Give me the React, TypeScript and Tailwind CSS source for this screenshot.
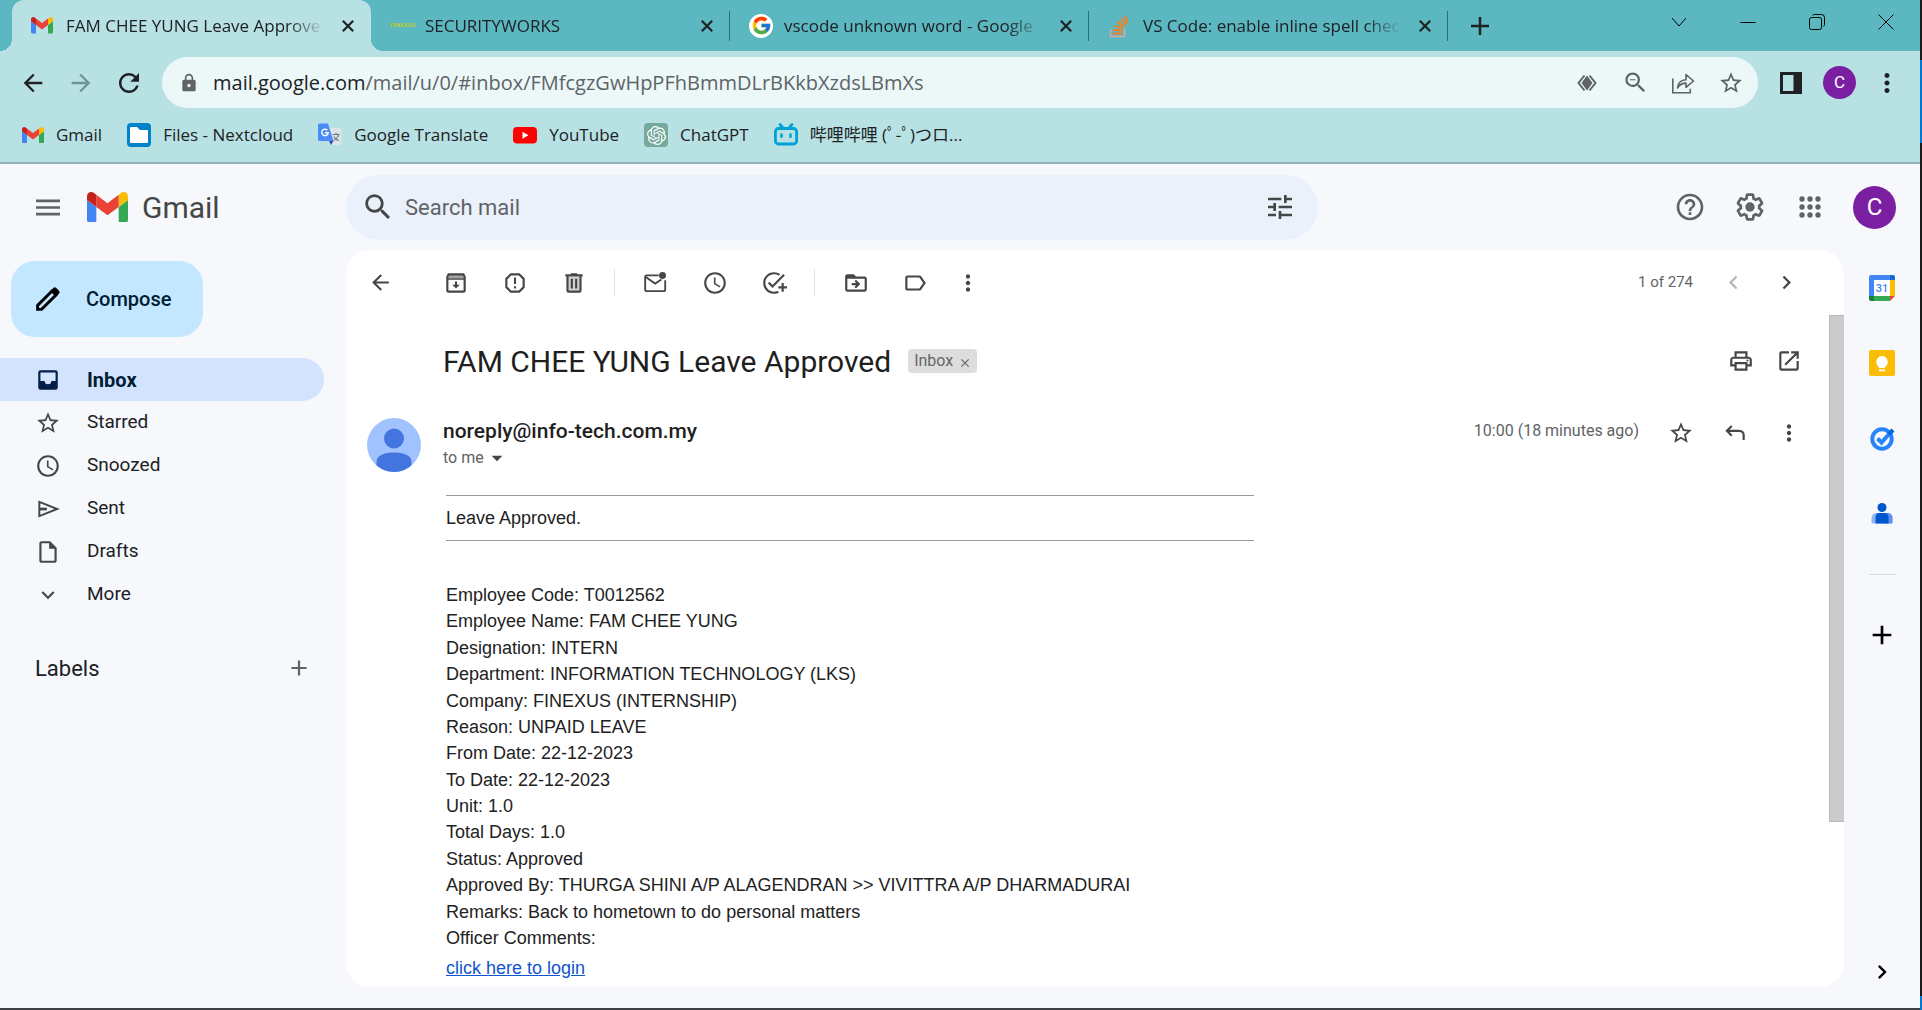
import React from "react";
import {
  MdAccessTime, MdAdd, MdAddTask, MdArrowBack, MdArrowDropDown, MdArrowForward, MdChevronLeft,
  MdChevronRight, MdClose, MdDriveFileMoveOutline, MdExpandMore, MdHelpOutline,
  MdLock, MdMenu, MdMoreVert, MdOpenInNew, MdOutlineInsertDriveFile, MdOutlineLabel, MdOutlinePrint,
  MdRefresh, MdSearch, MdStarBorder, MdTune, MdZoomOut,
} from "react-icons/md";
import { FcGoogle } from "react-icons/fc";
import { SiOpenai } from "react-icons/si";

type IconProps = { className?: string };

const GmailLogo = ({ className }: IconProps) => (
  <svg viewBox="52 42 88 66" className={className} aria-hidden="true">
    <path fill="#4285f4" d="M58 108h14V74L52 59v43c0 3.32 2.69 6 6 6" />
    <path fill="#34a853" d="M120 108h14c3.32 0 6-2.69 6-6V59l-20 15" />
    <path fill="#fbbc04" d="M120 48v26l20-15v-8c0-7.42-8.47-11.65-14.4-7.2" />
    <path fill="#ea4335" d="M72 74V48l24 18 24-18v26L96 92" />
    <path fill="#c5221f" d="M52 51v8l20 15V48l-5.6-4.2c-5.94-4.45-14.4-.22-14.4 7.2" />
  </svg>
);

const StackIcon = () => (
  <svg viewBox="0 0 24 24" className="size-6" fill="none" aria-hidden="true">
    <path d="M2.500 15v7.500h14V15" stroke="#d9a9a0" strokeWidth="1.500" />
    <path d="M5 19.500h9M5.300 15.800l8.800 1M6.600 11.800l8.300 2.800M9.300 7.600l6.900 5M13 4.200l5 6.600M17.500 2l1.600 7.500" stroke="#f48024" strokeWidth="2" />
  </svg>
);

const NextcloudIcon = () => (
  <svg viewBox="0 0 24 24" className="size-6" aria-hidden="true">
    <rect width="24" height="24" rx="4" fill="#0082c9" />
    <path d="M3 5a1 1 0 0 1 1-1h6l3 3h7a1 1 0 0 1 1 1v11a1 1 0 0 1-1 1H4a1 1 0 0 1-1-1z" fill="#fff" />
  </svg>
);

const TranslateIcon = () => (
  <svg viewBox="0 0 24 24" className="size-6" aria-hidden="true">
    <path d="M9 5h13a1.500 1.500 0 0 1 1.500 1.500v14A1.500 1.500 0 0 1 22 22h-8z" fill="#dfe3e6" />
    <path d="M14.500 11.500h7M18 9.800v1.700M20.500 11.500c-.7 3-2.700 5-5 6M15.800 13.500c1 2 3 3.500 5 4" stroke="#607988" strokeWidth="1.100" fill="none" />
    <path d="M11 18h4.500L13 22z" fill="#3949ab" />
    <path d="M1.500.500H10L15.500 18H1.500A1.500 1.500 0 0 1 0 16.500V2A1.500 1.500 0 0 1 1.500.500z" fill="#4b8bf5" />
    <path d="M9.300 7.200A3.200 3.200 0 1 0 10.200 9.700H7" stroke="#fff" strokeWidth="1.400" fill="none" />
  </svg>
);

const YouTubeIcon = () => (
  <svg viewBox="0 0 24 24" className="size-6" aria-hidden="true">
    <rect y="4" width="24" height="16.500" rx="4" fill="#f00" />
    <path d="M9.500 8.800v7l6-3.500z" fill="#fff" />
  </svg>
);

const ChatGptIcon = () => (
  <span className="flex size-6 items-center justify-center rounded bg-[#75a99b] text-white">
    <SiOpenai size={19} />
  </span>
);

const BilibiliIcon = () => (
  <svg viewBox="0 0 24 24" className="size-6" fill="none" stroke="#00a1d6" aria-hidden="true">
    <path d="M6 1.500l3 3.500M18 1.500l-3 3.500" strokeWidth="2.800" strokeLinecap="round" />
    <rect x="1.400" y="5.500" width="21.200" height="15.500" rx="3" strokeWidth="2.800" />
    <path d="M7.500 11.500v2.200M16.500 11.500v2.200" strokeWidth="2.600" strokeLinecap="round" />
  </svg>
);

const TabCloseIcon = () => (
  <svg viewBox="0 0 12 12" className="size-3" stroke="currentColor" strokeWidth="2.200" aria-hidden="true">
    <path d="M.800.800l10.400 10.400M11.200.800L.800 11.200" />
  </svg>
);

const NewTabIcon = () => (
  <svg viewBox="0 0 18 18" className="size-[18px]" stroke="currentColor" strokeWidth="2.500" aria-hidden="true">
    <path d="M9 0v18M0 9h18" />
  </svg>
);

const InboxIcon = () => (
  <svg viewBox="0 0 24 24" className="size-[26px]" aria-hidden="true">
    <path
      d="M5 3h14a2 2 0 0 1 2 2v14a2 2 0 0 1-2 2H5a2 2 0 0 1-2-2V5a2 2 0 0 1 2-2zm0 2v8h4a3 3 0 0 0 6 0h4V5z"
      fill="currentColor"
      fillRule="evenodd"
    />
  </svg>
);

const ArchiveIcon = () => (
  <svg viewBox="0 0 24 24" className="size-[26px]" fill="none" stroke="currentColor" strokeWidth="2" aria-hidden="true">
    <path d="M5.200 4h13.600L20 6.200V19a1 1 0 0 1-1 1H5a1 1 0 0 1-1-1V6.200z" />
    <path d="M4.500 4.500h15v3.200h-15z" fill="currentColor" fillOpacity=".5" stroke="none" />
    <path d="M4 8.300h16" strokeWidth="1.200" />
    <path d="M12 10.500v5" />
    <path d="M8.500 13.500h7L12 17z" fill="currentColor" stroke="none" />
  </svg>
);

const SpamIcon = () => (
  <svg viewBox="0 0 24 24" className="size-[26px]" fill="none" stroke="currentColor" aria-hidden="true">
    <path d="M8.200 4h7.600L20 8.200v7.600L15.800 20H8.200L4 15.800V8.200z" strokeWidth="2" strokeLinejoin="round" />
    <path d="M12 7v6M12 15v2" strokeWidth="1.900" />
  </svg>
);

const TrashIcon = () => (
  <svg viewBox="0 0 24 24" className="size-[26px]" aria-hidden="true">
    <path d="M6.500 6h11v13.500h-11z" fill="currentColor" fillOpacity=".25" />
    <path d="M15 4V3H9v1H4v2h1v13a2 2 0 0 0 2 2h10a2 2 0 0 0 2-2V6h1V4zm2 15H7V6h10z" fill="currentColor" />
    <path d="M9 8h2v9H9zM13 8h2v9h-2z" fill="currentColor" />
  </svg>
);

const UnreadIcon = () => (
  <svg viewBox="0 0 24 24" className="size-[26px]" aria-hidden="true">
    <path d="M14.500 5H3.500A1.500 1.500 0 0 0 2 6.500V18a1.500 1.500 0 0 0 1.500 1.500H19a1.500 1.500 0 0 0 1.500-1.500V9.500" fill="none" stroke="currentColor" strokeWidth="1.700" />
    <path d="M2.500 6.500l8.700 6L17 8.800" fill="none" stroke="currentColor" strokeWidth="1.700" />
    <circle cx="18" cy="5" r="3.200" fill="currentColor" />
  </svg>
);

const SendIcon = () => (
  <svg viewBox="0 0 24 24" className="size-[26px]" fill="none" stroke="currentColor" strokeWidth="1.800" aria-hidden="true">
    <path d="M4 5.500L20.500 12 4 18.500z" />
    <path d="M4 12H11" strokeWidth="2.500" />
  </svg>
);

const ReplyIcon = () => (
  <svg viewBox="0 0 24 24" className="size-[26px]" fill="none" stroke="currentColor" strokeWidth="2" aria-hidden="true">
    <path d="M9 5.500L4.500 10 9 14.500M4.500 10H16a4 4 0 0 1 4 4v4.500" />
  </svg>
);

const PencilIcon = () => (
  <svg viewBox="0 0 24 24" className="size-8 text-black" fill="none" stroke="currentColor" strokeWidth="2.200" aria-hidden="true">
    <path d="M4.200 19.800v-3L15 6l3 3L7.200 19.800z" />
    <path d="M16 3.800a1.500 1.500 0 0 1 2.200 0l2 2a1.500 1.500 0 0 1 0 2.200L18 10.200 13.800 6z" fill="currentColor" stroke="none" />
  </svg>
);

const GearIcon = () => (
  <svg viewBox="0 0 24 24" className="size-8" fill="currentColor" aria-hidden="true">
    <path d="M13.850 22.250h-3.700c-.74 0-1.360-.54-1.450-1.270l-.27-1.890c-.27-.14-.53-.29-.79-.46l-1.800.72c-.7.26-1.470-.03-1.810-.65L2.200 15.530c-.35-.66-.2-1.440.36-1.880l1.530-1.190c-.01-.15-.02-.3-.02-.46 0-.15.01-.31.02-.46l-1.520-1.190c-.59-.45-.74-1.260-.37-1.880l1.850-3.190c.34-.62 1.110-.9 1.790-.63l1.810.73c.26-.17.52-.32.78-.46l.27-1.910c.09-.7.71-1.250 1.440-1.250h3.700c.74 0 1.360.54 1.450 1.270l.27 1.890c.27.14.53.29.79.46l1.800-.72c.71-.26 1.480.03 1.820.65l1.840 3.180c.36.66.2 1.440-.36 1.880l-1.520 1.190c.01.15.02.3.02.46s-.01.31-.02.46l1.520 1.190c.56.45.72 1.230.37 1.860l-1.860 3.220c-.34.62-1.110.9-1.800.63l-1.800-.72c-.26.17-.52.32-.78.46l-.27 1.910c-.1.680-.72 1.220-1.460 1.220zm-3.230-2h2.760l.37-2.550.53-.22c.44-.18.88-.44 1.340-.78l.45-.34 2.380.96 1.380-2.400-2.030-1.580.07-.56c.03-.26.06-.51.06-.78s-.03-.53-.06-.78l-.07-.56 2.030-1.580-1.390-2.400-2.390.96-.45-.35c-.42-.32-.87-.58-1.330-.77l-.52-.22-.37-2.550h-2.760l-.37 2.550-.53.21c-.44.19-.88.44-1.340.79l-.45.33-2.380-.95-1.390 2.390 2.030 1.580-.07.56a7 7 0 0 0-.06.79c0 .26.02.53.06.78l.07.56-2.030 1.580 1.380 2.400 2.390-.96.45.35c.43.33.86.58 1.330.77l.53.22.38 2.550z" />
    <circle cx="12" cy="12" r="3.500" />
  </svg>
);

const AppsIcon = () => (
  <svg viewBox="0 0 24 24" className="size-8" fill="currentColor" aria-hidden="true">
    {[6, 12, 18].map((y) => [6, 12, 18].map((x) => <circle key={`${x}-${y}`} cx={x} cy={y} r="2" />))}
  </svg>
);

const DiamondIcon = () => (
  <svg viewBox="0 0 24 24" className="size-6" aria-hidden="true">
    <path d="M9.500 4.500L3.500 12l6 7.500M14.500 4.500l6 7.500-6 7.500" fill="none" stroke="currentColor" strokeWidth="2" />
    <path d="M12 4.500L17.500 12 12 19.500 6.500 12z" fill="currentColor" />
  </svg>
);

const ShareIcon = () => (
  <svg viewBox="0 0 24 24" className="size-6" fill="none" stroke="currentColor" strokeWidth="1.600" aria-hidden="true">
    <path d="M1.800 7.500v14.200h17.500v-4" />
    <path d="M6.500 17c.5-5 3-8 8.500-8.300V3.500l7.500 6.500L15 16.300v-4.200c-4 0-6.500 1.600-8.500 4.900z" strokeLinejoin="round" />
  </svg>
);

const SidePanelIcon = () => (
  <svg viewBox="0 0 22 22" className="size-[22px]" fill="currentColor" aria-hidden="true">
    <path d="M0 0h22v22H0zM3 3v16h10.500V3z" fillRule="evenodd" />
  </svg>
);

const CalendarIcon = () => (
  <svg viewBox="0 0 26 26" className="size-[26px]" aria-hidden="true">
    <path d="M2 0h19v5H5v16H0V2a2 2 0 0 1 2-2z" fill="#4285f4" />
    <path d="M21 0h3a2 2 0 0 1 2 2v3h-5z" fill="#1967d2" />
    <path d="M21 5h5v16h-5z" fill="#fbbc04" />
    <path d="M5 21h16v5H5z" fill="#34a853" />
    <path d="M0 21h5v5H2a2 2 0 0 1-2-2z" fill="#188038" />
    <path d="M21 21h5l-5 5z" fill="#ea4335" />
    <path d="M5 5h16v16H5z" fill="#fff" />
    <text x="13" y="17" textAnchor="middle" fontFamily="Roboto, sans-serif" fontSize="11" fontWeight="500" fill="#4285f4">31</text>
  </svg>
);

const KeepIcon = () => (
  <svg viewBox="0 0 26 26" className="size-[26px]" aria-hidden="true">
    <rect width="26" height="26" rx="2" fill="#fbbc04" />
    <path d="M13 6a6 6 0 0 0-3 11v1h6v-1a6 6 0 0 0-3-11zM10 19.500h6v1.700h-6z" fill="#fff" />
  </svg>
);

const TasksIcon = () => (
  <svg viewBox="0 0 26 26" className="size-[26px]" fill="none" aria-hidden="true">
    <circle cx="13" cy="14" r="9.700" stroke="#2684fc" strokeWidth="4" />
    <path d="M8.500 13.500l4 4L21 8" stroke="#2684fc" strokeWidth="4" />
    <path d="M18.500 7.500l4-4 3 3-4.500 4.500z" fill="#0066da" />
  </svg>
);

const ContactsIcon = () => (
  <svg viewBox="0 0 24 26" className="h-[26px] w-6" aria-hidden="true">
    <path d="M7 13h10c3.500 0 5.500 2 5.500 5v4a1.500 1.500 0 0 1-1.500 1.500H3A1.500 1.500 0 0 1 1.500 22v-3.500C1.500 15 4 13 7 13z" fill="#8fb4fb" />
    <path d="M14 13h3c3.500 0 5.500 2 5.500 5v4a1.500 1.500 0 0 1-1.500 1.500h-7z" fill="#5f8ff5" />
    <path d="M9.500 13h5c3 0 4 2 4 4.500v6h-13v-6C5.500 15 7 13 9.500 13z" fill="#0057cc" />
    <circle cx="12" cy="7.500" r="4.500" fill="#0057cc" />
  </svg>
);

const tabs = [
  { title: "FAM CHEE YUNG Leave Approve", icon: <GmailLogo className="w-[22px]" />, active: true },
  { title: "SECURITYWORKS", icon: <span className="text-[6px] font-bold text-[#c3cb22]">FINEXUS</span> },
  { title: "vscode unknown word - Google", icon: <span className="flex size-6 items-center justify-center rounded-full bg-white"><FcGoogle size={21} /></span> },
  { title: "VS Code: enable inline spell chec", icon: <StackIcon /> },
];

const bookmarks = [
  { title: "Gmail", icon: <GmailLogo className="w-[22px]" /> },
  { title: "Files - Nextcloud", icon: <NextcloudIcon /> },
  { title: "Google Translate", icon: <TranslateIcon /> },
  { title: "YouTube", icon: <YouTubeIcon /> },
  { title: "ChatGPT", icon: <ChatGptIcon /> },
  { title: "哔哩哔哩 (ﾟ-ﾟ)つロ...", icon: <BilibiliIcon /> },
];

const folders = [
  { name: "Inbox", icon: <InboxIcon />, active: true },
  { name: "Starred", icon: <MdStarBorder size={26} /> },
  { name: "Snoozed", icon: <MdAccessTime size={26} /> },
  { name: "Sent", icon: <SendIcon /> },
  { name: "Drafts", icon: <MdOutlineInsertDriveFile size={26} /> },
  { name: "More", icon: <MdExpandMore size={26} /> },
];

const toolGroups = [
  [
    { label: "Archive", icon: <ArchiveIcon /> },
    { label: "Report spam", icon: <SpamIcon /> },
    { label: "Delete", icon: <TrashIcon /> },
  ],
  [
    { label: "Mark as unread", icon: <UnreadIcon /> },
    { label: "Snooze", icon: <MdAccessTime size={26} /> },
    { label: "Add to Tasks", icon: <MdAddTask size={26} /> },
  ],
  [
    { label: "Move to", icon: <MdDriveFileMoveOutline size={26} /> },
    { label: "Labels", icon: <MdOutlineLabel size={26} /> },
  ],
];

const lines = [
  "Employee Code: T0012562",
  "Employee Name: FAM CHEE YUNG",
  "Designation: INTERN",
  "Department: INFORMATION TECHNOLOGY (LKS)",
  "Company: FINEXUS (INTERNSHIP)",
  "Reason: UNPAID LEAVE",
  "From Date: 22-12-2023",
  "To Date: 22-12-2023",
  "Unit: 1.0",
  "Total Days: 1.0",
  "Status: Approved",
  "Approved By: THURGA SHINI A/P ALAGENDRAN >> VIVITTRA A/P DHARMADURAI",
  "Remarks: Back to hometown to do personal matters",
  "Officer Comments:",
];

function IconButton({ label, className = "", children }: { label: string; className?: string; children: React.ReactNode }) {
  return (
    <button type="button" aria-label={label} className={`flex shrink-0 items-center justify-center ${className}`}>
      {children}
    </button>
  );
}

function TabStrip() {
  return (
    <div className="flex h-[51px] shrink-0 bg-[#5bb8c1] pl-3">
      {tabs.map((tab) => (
        <div
          key={tab.title}
          className={`relative flex w-[359px] items-center pl-[19px] ${tab.active ? "rounded-t-xl bg-[#b8e1e4]" : ""}`}
        >
          {tab.active && (
            <>
              <span className="absolute bottom-0 -left-3 size-3 bg-[radial-gradient(circle_at_top_left,transparent_12px,#b8e1e4_12px)]" />
              <span className="absolute -right-3 bottom-0 size-3 bg-[radial-gradient(circle_at_top_right,transparent_12px,#b8e1e4_12px)]" />
            </>
          )}
          <span className="flex w-[35px] shrink-0">{tab.icon}</span>
          <span className="w-[258px] whitespace-nowrap text-[17px] [mask-image:linear-gradient(to_right,#000_86%,transparent)]">
            {tab.title}
          </span>
          <IconButton label={`Close ${tab.title}`} className="ml-3 size-6">
            <TabCloseIcon />
          </IconButton>
          {!tab.active && <span className="absolute top-[11px] right-0 h-[30px] w-px bg-[#2b6f76]" />}
        </div>
      ))}
      <IconButton label="New tab" className="ml-4 w-8">
        <NewTabIcon />
      </IconButton>
      <div className="ml-auto flex h-[43px] text-black">
        <IconButton label="Search tabs" className="w-[69px]">
          <svg viewBox="0 0 16 16" className="size-4" fill="none" stroke="currentColor"><path d="M1 4l7 8 7-8" /></svg>
        </IconButton>
        <IconButton label="Minimise" className="w-[69px]">
          <svg viewBox="0 0 16 16" className="size-4" stroke="currentColor"><path d="M.500 8.500h15" /></svg>
        </IconButton>
        <IconButton label="Restore" className="w-[69px]">
          <svg viewBox="0 0 16 16" className="size-4" fill="none" stroke="currentColor">
            <rect x=".500" y="3.500" width="12" height="12" rx="2" />
            <path d="M3.500 1.500C4 .800 4.500.500 5.500.500h7a3 3 0 0 1 3 3v7c0 1-.300 1.500-1 2" />
          </svg>
        </IconButton>
        <IconButton label="Close window" className="w-[69px]">
          <svg viewBox="0 0 16 16" className="size-4" stroke="currentColor"><path d="M.500.500l15 15M15.500.500l-15 15" /></svg>
        </IconButton>
      </div>
    </div>
  );
}

function AddressBar() {
  return (
    <div className="flex shrink-0 items-center pt-[6px]">
      <IconButton label="Back" className="ml-[9px] w-12"><MdArrowBack size={28} /></IconButton>
      <IconButton label="Forward" className="w-12 text-[#6f9497]"><MdArrowForward size={28} /></IconButton>
      <IconButton label="Reload" className="w-12"><MdRefresh size={30} /></IconButton>
      <div className="ml-[9px] flex h-[51px] min-w-0 flex-1 items-center rounded-full bg-[#ecf8f8] pr-[3px] pl-[17px] text-[#5f6368]">
        <MdLock size={20} className="shrink-0" />
        <p className="ml-[14px] min-w-0 flex-1 truncate text-[20px]">
          <span className="text-[#202124]">mail.google.com</span>/mail/u/0/#inbox/FMfcgzGwHpPFhBmmDLrBKkbXzdsLBmXs
        </p>
        <IconButton label="Extension" className="w-12"><DiamondIcon /></IconButton>
        <IconButton label="Zoom" className="w-12"><MdZoomOut size={27} /></IconButton>
        <IconButton label="Share this page" className="w-12"><ShareIcon /></IconButton>
        <IconButton label="Bookmark this tab" className="w-12"><MdStarBorder size={26} /></IconButton>
      </div>
      <IconButton label="Side panel" className="ml-[9px] w-12"><SidePanelIcon /></IconButton>
      <IconButton label="Profile" className="ml-2 size-[33px] rounded-full bg-[#7b1fa2] font-[Roboto] text-[17px] text-white">C</IconButton>
      <IconButton label="Browser menu" className="mr-[9px] ml-[7px] w-12"><MdMoreVert size={30} /></IconButton>
    </div>
  );
}

function BookmarksBar() {
  return (
    <nav className="flex h-[54px] shrink-0 items-center gap-[25px] pl-[22px] text-[17px]">
      {bookmarks.map((b) => (
        <a key={b.title} href="#" className="flex items-center gap-3 whitespace-nowrap">
          {b.icon}
          {b.title}
        </a>
      ))}
    </nav>
  );
}

function MailHeader() {
  return (
    <header className="flex h-[86px] shrink-0 items-center text-[#5f6368]">
      <div className="flex w-[346px] shrink-0 items-center pl-8">
        <IconButton label="Main menu" className="size-8"><MdMenu size={33} /></IconButton>
        <GmailLogo className="ml-[23px] w-[41px]" />
        <span className="ml-[14px] text-[30px] text-[#444746]">Gmail</span>
      </div>
      <label className="flex h-[65px] w-[972px] items-center rounded-full bg-[#eaf1fb] px-[15px]">
        <MdSearch size={34} className="text-[#444746]" />
        <input
          type="text"
          aria-label="Search mail"
          placeholder="Search mail"
          className="ml-[10px] min-w-0 flex-1 bg-transparent text-[22px] outline-none placeholder:text-[#5f6368]"
        />
        <IconButton label="Search options" className="w-[46px] text-[#444746]"><MdTune size={32} /></IconButton>
      </label>
      <div className="ml-auto flex items-center">
        <IconButton label="Support" className="w-[60px]"><MdHelpOutline size={32} /></IconButton>
        <IconButton label="Settings" className="w-[60px]"><GearIcon /></IconButton>
        <IconButton label="Google apps" className="w-[60px]"><AppsIcon /></IconButton>
        <IconButton label="Google Account" className="mr-6 ml-[13px] size-[43px] rounded-full bg-[#7b1fa2] text-[24px] text-white">C</IconButton>
      </div>
    </header>
  );
}

function Sidebar() {
  return (
    <aside className="w-[346px] shrink-0 pt-[11px]">
      <button type="button" className="ml-[11px] flex h-[76px] w-[192px] items-center rounded-3xl bg-[#c2e7ff] pl-[21px] text-[20px] font-medium text-[#001d35]">
        <PencilIcon />
        <span className="ml-[22px]">Compose</span>
      </button>
      <nav className="mt-[21px] mr-[22px] flex flex-col">
        {folders.map((f) => (
          <a
            key={f.name}
            href="#"
            className={`flex h-[43px] items-center gap-[26px] rounded-r-full pl-[35px] ${
              f.active ? "bg-[#d3e3fd] text-[20px] font-bold text-[#001d35]" : "text-[19px] text-[#202124]"
            }`}
          >
            <span className={f.active ? "text-[#041e49]" : "text-[#444746]"}>{f.icon}</span>
            {f.name}
          </a>
        ))}
      </nav>
      <div className="mt-7 flex h-12 items-center justify-between pr-[31px] pl-[35px]">
        <h2 className="text-[22px] text-[#202124]">Labels</h2>
        <IconButton label="Create new label" className="size-8 text-[#5f6368]"><MdAdd size={26} /></IconButton>
      </div>
    </aside>
  );
}

function MessageToolbar() {
  return (
    <div className="flex h-[65px] shrink-0 items-center pl-[5px] text-[#444746]">
      <IconButton label="Back to Inbox" className="mr-4 w-[59px]"><MdArrowBack size={25} /></IconButton>
      {toolGroups.map((group, i) => (
        <div key={i} className="flex items-center">
          {i > 0 && <span className="mx-[11px] h-[27px] w-px bg-[#dfe1e4]" />}
          {group.map((t) => (
            <IconButton key={t.label} label={t.label} className="w-[59px]">{t.icon}</IconButton>
          ))}
        </div>
      ))}
      <IconButton label="More" className="w-12"><MdMoreVert size={26} /></IconButton>
      <span className="ml-auto text-[15px] text-[#5f6368]">1 of 274</span>
      <IconButton label="Newer" className="ml-[14px] w-[53px] text-[#b4b6b7]"><MdChevronLeft size={27} /></IconButton>
      <IconButton label="Older" className="mr-[31px] w-[53px]"><MdChevronRight size={27} /></IconButton>
    </div>
  );
}

function Message() {
  return (
    <article className="min-w-0 flex-1 pt-[22px]">
      <div className="flex h-12 items-center pr-4 pl-[97px] text-[#444746]">
        <h1 className="text-[30px] text-[#1f1f1f]">FAM CHEE YUNG Leave Approved</h1>
        <span className="ml-[17px] flex h-6 items-center rounded bg-[#ddd] pl-[6px] text-[16px] text-[#666]">
          Inbox
          <IconButton label="Remove label Inbox" className="w-6 pt-1"><MdClose size={14} /></IconButton>
        </span>
        <IconButton label="Print all" className="ml-auto w-12"><MdOutlinePrint size={26} /></IconButton>
        <IconButton label="In new window" className="w-12"><MdOpenInNew size={26} /></IconButton>
      </div>
      <div className="mt-8 flex h-[58px] pr-[13px] pl-[21px]">
        <svg viewBox="0 0 54 54" className="mt-px size-[54px] shrink-0" role="img" aria-label="Sender">
          <clipPath id="avatar"><circle cx="27" cy="27" r="27" /></clipPath>
          <g clipPath="url(#avatar)">
            <path d="M0 0h54v54H0z" fill="#a0c3ff" />
            <circle cx="27" cy="20.500" r="10" fill="#4374e0" />
            <path d="M9.500 54V44c0-7 8-9.500 17.500-9.500S44.500 37 44.500 44v10z" fill="#4374e0" />
          </g>
        </svg>
        <div className="ml-[22px]">
          <p className="text-[21px] leading-7 font-medium text-[#1f1f1f]">noreply@info-tech.com.my</p>
          <button type="button" className="flex items-center text-[16px] leading-6 text-[#5f6368]">
            to me
            <MdArrowDropDown size={26} className="text-[#444746]" />
          </button>
        </div>
        <div className="ml-auto flex h-8 items-center text-[#444746]">
          <time className="mr-[15px] pb-1 text-[16px] text-[#5f6368]">10:00 (18 minutes ago)</time>
          <IconButton label="Star" className="w-[54px]"><MdStarBorder size={26} /></IconButton>
          <IconButton label="Reply" className="w-[54px]"><ReplyIcon /></IconButton>
          <IconButton label="More options" className="w-[54px]"><MdMoreVert size={26} /></IconButton>
        </div>
      </div>
      <div className="ml-[100px] max-w-[808px] pt-5 font-['Liberation_Sans',Arial,sans-serif] text-[18px] leading-[26px] text-[#222]">
        <hr className="border-[#9a9a9a]" />
        <p className="py-[9px]">Leave Approved.</p>
        <hr className="border-[#9a9a9a]" />
        <div className="mt-[41px] flex min-h-[369px] flex-col justify-between whitespace-nowrap">
          {lines.map((l) => (
            <p key={l}>{l}</p>
          ))}
        </div>
        <a href="#" className="mt-1 inline-block text-[#1155cc] underline">click here to login</a>
      </div>
    </article>
  );
}

function SidePanel() {
  return (
    <aside className="flex w-[76px] shrink-0 flex-col items-center pt-[25px]">
      <div className="flex flex-col items-center gap-[49px]">
        <IconButton label="Calendar" className="size-[26px]"><CalendarIcon /></IconButton>
        <IconButton label="Keep" className="size-[26px]"><KeepIcon /></IconButton>
        <IconButton label="Tasks" className="size-[26px]"><TasksIcon /></IconButton>
        <IconButton label="Contacts" className="size-[26px]"><ContactsIcon /></IconButton>
      </div>
      <hr className="mt-[48px] w-[27px] border-[#dadce0]" />
      <IconButton label="Get add-ons" className="mt-11 size-8 text-black"><MdAdd size={32} /></IconButton>
      <IconButton label="Hide side panel" className="mt-auto mb-5 size-8 text-black"><MdChevronRight size={28} /></IconButton>
    </aside>
  );
}

export default function App() {
  return (
    <div className="flex h-screen overflow-hidden">
      <div className="flex min-w-0 flex-1 flex-col border-b-2 border-[#3f4245] bg-[#f6f8fc]">
        <div className="flex shrink-0 flex-col border-b-2 border-[#8fb3b7] bg-[#b8e1e4] font-['Open_Sans','Noto_Sans_CJK_SC',sans-serif] text-[#202124]">
          <TabStrip />
          <AddressBar />
          <BookmarksBar />
        </div>
        <div className="flex min-h-0 flex-1 flex-col font-[Roboto,sans-serif]">
          <MailHeader />
          <div className="flex min-h-0 flex-1">
            <Sidebar />
            <main className="mb-[21px] flex min-w-0 flex-1 flex-col overflow-hidden rounded-3xl bg-white">
              <MessageToolbar />
              <div className="flex min-h-0 flex-1">
                <Message />
                <div className="w-[15px] shrink-0">
                  <div className="h-[507px] border border-r-0 border-[#b8b8b8] bg-[#cbcbcb]" />
                </div>
              </div>
            </main>
            <SidePanel />
          </div>
        </div>
      </div>
      <div className="flex w-[2px] shrink-0 flex-col bg-[#1b1b1b]">
        <div className="mt-[60px] h-[83px] bg-[#0078d4]" />
        <div className="mt-auto h-[14px] bg-[#0078d4]" />
      </div>
    </div>
  );
}
